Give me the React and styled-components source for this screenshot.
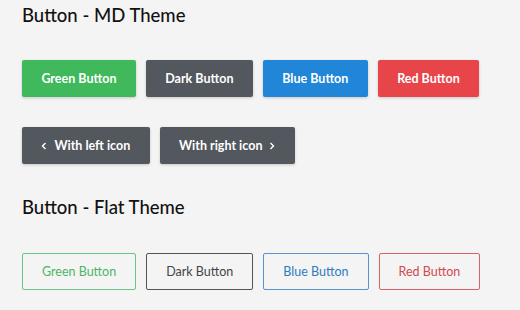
import React from "react";
import styled, { createGlobalStyle, css } from "styled-components";

const GlobalStyle = createGlobalStyle`
  html, body {
    margin: 0;
    background: #f4f4f4;
  }
  body {
    font-family: Lato, "Open Sans", sans-serif;
    -webkit-font-smoothing: antialiased;
  }
`;

const colors = {
  green: "#3fb95b",
  dark: "#53575e",
  blue: "#2185d8",
  red: "#e8454a",
};

const flatColors = {
  green: { text: "#4db565", border: "#6cc483" },
  dark: { text: "#444", border: "#555" },
  blue: { text: "#2f7cc0", border: "#5b94cc" },
  red: { text: "#d04a4e", border: "#d86266" },
};

const Page = styled.div`
  padding: 3px 22px 0;
`;

const Heading = styled.h2`
  margin: 0;
  margin-top: ${(p) => p.$top || 0}px;
  font-size: 18.5px;
  line-height: 24px;
  font-weight: 500;
  color: #111;
`;

const Row = styled.div`
  display: flex;
  gap: 10px;
  margin-top: ${(p) => p.$top}px;
`;

const Button = styled.button`
  display: inline-flex;
  flex-shrink: 0;
  align-items: center;
  justify-content: center;
  gap: 7px;
  height: 37px;
  padding: 0 19.4px;
  border-radius: 2px;
  font-family: Lato, sans-serif;
  font-size: 12.5px;
  white-space: nowrap;
  cursor: pointer;

  ${(p) =>
    p.$flat
      ? css`
          padding: 0 19px;
          background: transparent;
          font-weight: 400;
          color: ${flatColors[p.$color].text};
          border: 1px solid ${flatColors[p.$color].border};
        `
      : css`
          background: ${colors[p.$color]};
          font-weight: 700;
          color: #fff;
          border: none;
          box-shadow: 0 1px 3px rgba(0, 0, 0, 0.18);
        `}
`;

const Chevron = ({ dir }) => (
  <svg width="6" height="8" viewBox="0 0 6 8" fill="none">
    <path
      d={dir === "left" ? "M4.5 1 L1.5 4 L4.5 7" : "M1.5 1 L4.5 4 L1.5 7"}
      stroke="#fff"
      strokeWidth="1.4"
    />
  </svg>
);

const labels = [
  ["green", "Green Button"],
  ["dark", "Dark Button"],
  ["blue", "Blue Button"],
  ["red", "Red Button"],
];

export default function App() {
  return (
    <>
      <GlobalStyle />
      <Page>
        <Heading>Button - MD Theme</Heading>
        <Row $top={33}>
          {labels.map(([c, t]) => (
            <Button key={c} $color={c}>
              {t}
            </Button>
          ))}
        </Row>
        <Row $top={30}>
          <Button $color="dark">
            <Chevron dir="left" />
            With left icon
          </Button>
          <Button $color="dark">
            With right icon
            <Chevron dir="right" />
          </Button>
        </Row>
        <Heading $top={31}>Button - Flat Theme</Heading>
        <Row $top={34}>
          {labels.map(([c, t]) => (
            <Button key={c} $color={c} $flat>
              {t}
            </Button>
          ))}
        </Row>
      </Page>
    </>
  );
}
